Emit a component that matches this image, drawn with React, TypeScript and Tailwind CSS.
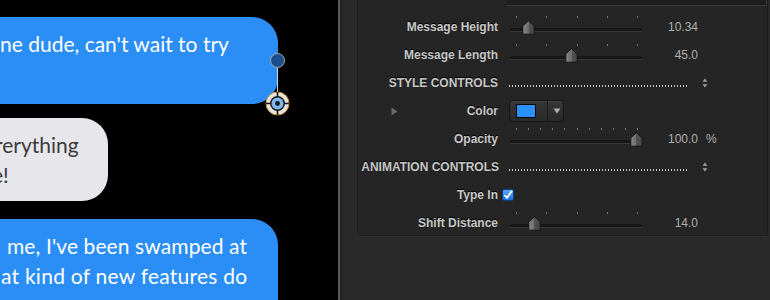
import React from 'react';

const labelFont = { fontFamily: '"Liberation Sans", Arial, sans-serif' };
const bubbleFont = { fontFamily: 'Lato, "Open Sans", sans-serif' };

function Thumb() {
  return (
    <svg width="13" height="15" viewBox="0 0 13 15" aria-hidden>
      <defs>
        <linearGradient id="thumbFill" x1="0" y1="0" x2="1" y2="0">
          <stop offset="0" stopColor="#8a8a8a" />
          <stop offset="0.5" stopColor="#6a6a6a" />
          <stop offset="0.5" stopColor="#555" />
          <stop offset="1" stopColor="#454545" />
        </linearGradient>
      </defs>
      <path d="M6.5 0.8 L12.2 5.8 L12.2 14.2 L0.8 14.2 L0.8 5.8 Z" fill="url(#thumbFill)" stroke="#161616" strokeWidth="1" />
    </svg>
  );
}

function Slider({ thumb, ticks }: { thumb: number; ticks: number }) {
  const marks = Array.from({ length: ticks }, (_, i) => 6 + (i * 121) / (ticks - 1));
  return (
    <div className="relative h-[28px] w-[132px]">
      {marks.map((x) => (
        <span key={x} className="absolute top-[3px] h-[2px] w-[1px] bg-[#7a7a7a]" style={{ left: x }} />
      ))}
      <div className="absolute left-0 right-0 top-[15px] h-[3px] rounded-full bg-[#171717] shadow-[0_1px_0_#383838]" />
      <div className="absolute top-[7px]" style={{ left: thumb - 6.5 }}>
        <Thumb />
      </div>
    </div>
  );
}

function Dots() {
  return (
    <div className="flex h-[28px] w-[200px] items-center">
      <div className="mt-[6px] h-[2px] w-[182px] bg-[radial-gradient(circle,#c4c4c4_0.8px,transparent_1.1px)] bg-[length:3px_2px]" />
      <svg className="ml-[15px]" width="6" height="10" viewBox="0 0 6 10" aria-hidden>
        <path d="M3 0.5 L5.5 3.8 L0.5 3.8 Z" fill="#a0a0a0" />
        <path d="M3 9.5 L5.5 6.2 L0.5 6.2 Z" fill="#a0a0a0" />
      </svg>
    </div>
  );
}

function Row({ label, children, value }: { label: React.ReactNode; children?: React.ReactNode; value?: React.ReactNode }) {
  return (
    <div className="flex h-[28px] items-center">
      <div className="w-[140px] text-right text-[12px] font-bold leading-none text-[#c8c8c8] [text-shadow:0_-1px_0_#000]">
        {label}
      </div>
      <div className="ml-[12px] flex items-center">{children}</div>
      {value !== undefined && <div className="flex items-center text-[12px] leading-none text-[#b0b0b0]">{value}</div>}
    </div>
  );
}

function Value({ children }: { children: React.ReactNode }) {
  return <div className="w-[56px] text-right">{children}</div>;
}

export default function App() {
  return (
    <div className="flex h-[300px] w-[770px] overflow-hidden bg-black" style={labelFont}>
      {/* canvas */}
      <div className="relative h-full w-[338px] shrink-0 overflow-hidden bg-black" style={bubbleFont}>
        <div className="flex flex-col pt-[17px] text-[21px] leading-[30px]">
          <div className="-ml-[40px] h-[87px] w-[318px] rounded-[26px] bg-[#2a8ef6] pl-[40px] pt-[12px] text-white">
            <div className="whitespace-nowrap">ne dude, can't wait to try</div>
          </div>
          <div className="-ml-[40px] mt-[14px] h-[83px] w-[148px] overflow-hidden rounded-[26px] bg-[#e6e6eb] pt-[12px] text-[#3b3b3b]">
            <div className="-ml-[5px] whitespace-nowrap pl-[40px]">rerything</div>
            <div className="-ml-[8px] whitespace-nowrap pl-[40px]">e!</div>
          </div>
          <div className="-ml-[40px] mt-[18px] h-[120px] w-[318px] rounded-[26px] bg-[#2a8ef6] pl-[40px] pt-[12px] text-white">
            <div className="whitespace-nowrap pl-[7px] tracking-[0.1px]">me, I've been swamped at</div>
            <div className="whitespace-nowrap pl-[1px] tracking-[0.25px]">at kind of new features do</div>
          </div>
        </div>

        {/* bubble tail handles */}
        <div className="absolute left-[277px] top-[60px] h-[43px] w-[1px] bg-[#c8d6e6]" />
        <div className="absolute left-[270px] top-[53px] h-[15px] w-[15px] rounded-full border-[1.5px] border-[#a8a8a8] bg-[#1b4f8c]" />
        <svg className="absolute left-[265px] top-[91px]" width="25" height="25" viewBox="0 0 25 25" aria-hidden>
          <circle cx="12.5" cy="12.5" r="11.5" fill="#e8e4dc" stroke="#c8903a" strokeWidth="1" />
          <circle cx="12.5" cy="12.5" r="7.5" fill="#1a1a1a" />
          <circle cx="12.5" cy="12.5" r="6" fill="#7fb6ee" />
          <circle cx="12.5" cy="12.5" r="2.4" fill="#1a1a1a" />
          <path d="M12.5 1 V6 M12.5 19 V24 M1 12.5 H6 M19 12.5 H24" stroke="#111" strokeWidth="1.6" />
        </svg>
      </div>

      {/* separator */}
      <div className="h-full w-[2px] shrink-0 bg-[#5c5c5c]" />
      <div className="h-full w-[1px] shrink-0 bg-[#1a1a1a]" />

      {/* inspector */}
      <div className="h-full flex-1 bg-[#292929] pl-[16px]">
        <div className="relative h-[236px] w-[411px] rounded-bl-[6px] border-b border-l border-r border-[#1c1c1c] bg-[#252525] shadow-[0_1px_0_#333]">
          <div className="ml-[149px] h-[6px] w-[260px] border-b border-r border-[#3a3a3a] bg-[#1e1e1e]" />
          <div className="pt-[7px]">
            <Row label="Message Height" value={<Value>10.34</Value>}>
              <Slider thumb={18} ticks={5} />
            </Row>
            <Row label="Message Length" value={<Value>45.0</Value>}>
              <Slider thumb={61} ticks={5} />
            </Row>
            <Row label="STYLE CONTROLS">
              <div className="-ml-[2px]">
                <Dots />
              </div>
            </Row>
            <Row
              label={
                <div className="flex items-center justify-between">
                  <svg className="ml-[33px]" width="7" height="9" viewBox="0 0 7 9" aria-hidden>
                    <path d="M0.5 0.5 L6.5 4.5 L0.5 8.5 Z" fill="#6a6a6a" />
                  </svg>
                  <span>Color</span>
                </div>
              }
            >
              <div className="-ml-[1px] flex h-[22px] w-[55px] items-center rounded-[4px] border border-[#151515] bg-[linear-gradient(#363636,#2a2a2a)] shadow-[inset_0_1px_0_#444]">
                <div className="ml-[6px] h-[14px] w-[20px] border border-black bg-[#2a90fb]" />
                <div className="ml-[11px] h-full w-[1px] bg-[#1a1a1a]" />
                <svg className="ml-[5px]" width="8" height="6" viewBox="0 0 8 6" aria-hidden>
                  <path d="M0.5 0.5 L7.5 0.5 L4 5.5 Z" fill="#b0b0b0" />
                </svg>
              </div>
            </Row>
            <Row
              label="Opacity"
              value={
                <>
                  <Value>100.0</Value>
                  <span className="ml-[8px]">%</span>
                </>
              }
            >
              <Slider thumb={126} ticks={11} />
            </Row>
            <Row label={<span className="-mr-[1px]">ANIMATION CONTROLS</span>}>
              <div className="-ml-[2px]">
                <Dots />
              </div>
            </Row>
            <Row label="Type In">
              <div className="-ml-[8px] flex h-[12px] w-[12px] items-center justify-center rounded-[2px] border border-[#0d3f86] bg-[linear-gradient(#5aa6ff,#1f6fdc)]">
                <svg width="10" height="10" viewBox="0 0 10 10" aria-hidden>
                  <path d="M1.5 5.2 L4 7.8 L9 0.8" fill="none" stroke="#fff" strokeWidth="1.8" />
                </svg>
              </div>
            </Row>
            <Row label="Shift Distance" value={<Value>14.0</Value>}>
              <Slider thumb={24} ticks={5} />
            </Row>
          </div>
        </div>
      </div>
    </div>
  );
}
